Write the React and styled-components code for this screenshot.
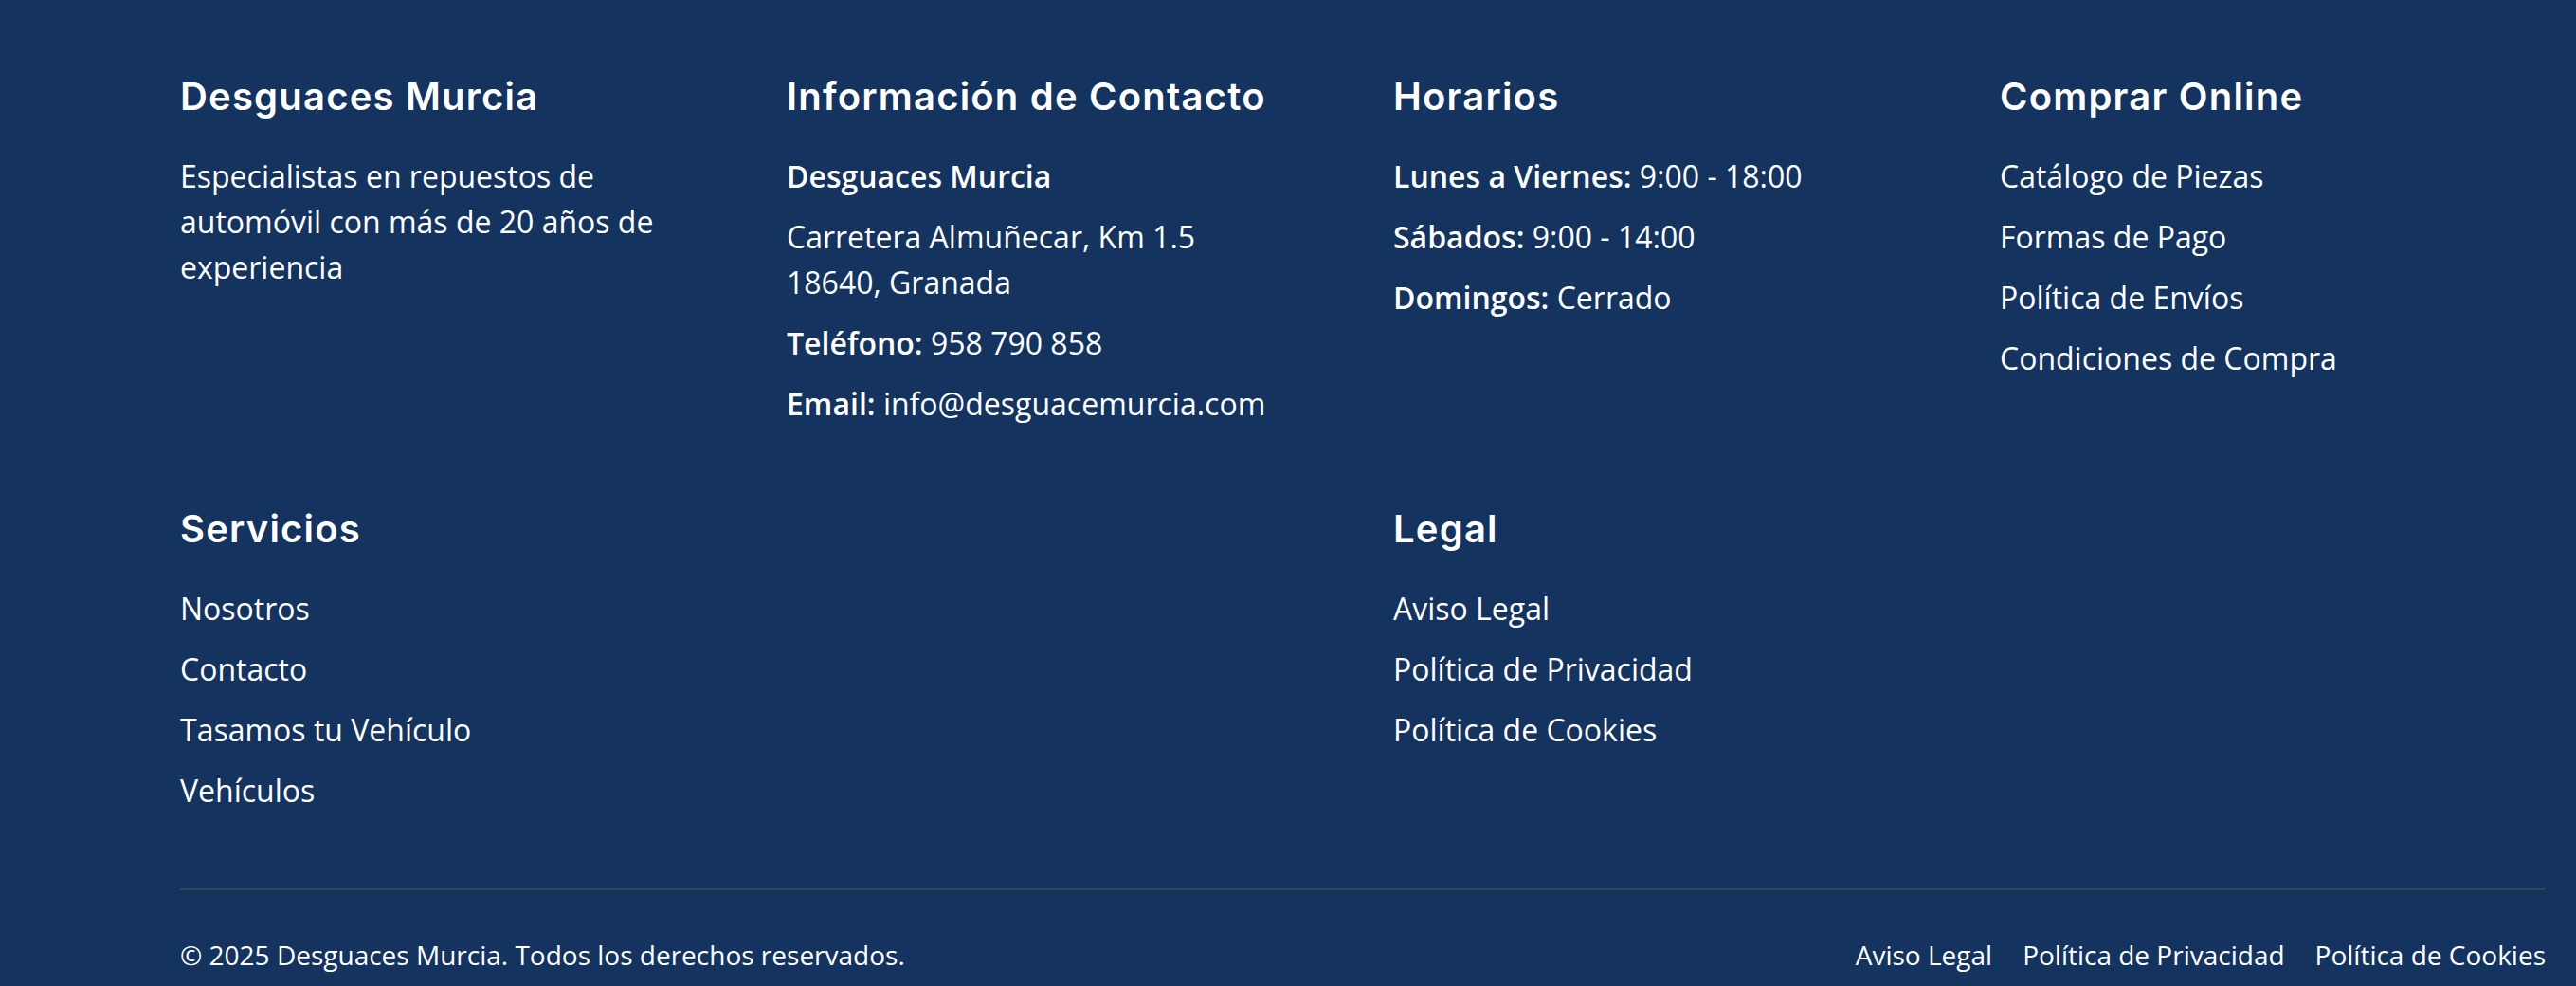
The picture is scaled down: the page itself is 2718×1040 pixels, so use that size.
import React from 'react'
import styled, { createGlobalStyle } from 'styled-components'

const Global = createGlobalStyle`
  html, body {
    margin: 0;
    padding: 0;
    background: #14335F;
  }
  * { box-sizing: border-box; }
`;

const Rodape = styled.footer`
  background: #14335F;
  color: #ffffff;
  font-family: "Open Sans", "Noto Sans", sans-serif;
  padding: 78px 32px 32px 190px;
  min-height: 1040px;
`;

const Grade = styled.div`
  display: grid;
  grid-template-columns: repeat(4, 1fr);
  column-gap: 64px;
  row-gap: 84px;
`;

const Coluna = styled.div`
  grid-column: ${p => p.$col || 'auto'};
`;

const Titulo = styled.h3`
  font-family: "Inter", "Liberation Sans", sans-serif;
  font-size: 40px;
  font-weight: 600;
  line-height: 48px;
  letter-spacing: 1.2px;
  margin: 0 0 36px 0;
`;

const Texto = styled.p`
  font-size: 32px;
  line-height: 48px;
  margin: 0 0 16px 0;
  &:last-child { margin-bottom: 0; }
  b { font-weight: 600; }
`;

const Lista = styled.ul`
  list-style: none;
  margin: 0;
  padding: 0;
`;

const Item = styled.li`
  font-size: 32px;
  line-height: 48px;
  margin-bottom: 16px;
  &:last-child { margin-bottom: 0; }
`;

const Link = styled.a`
  color: #ffffff;
  text-decoration: none;
`;

const Base = styled.div`
  margin-top: 79px;
  border-top: 2px solid #374151;
  padding-top: 47px;
  display: flex;
  justify-content: space-between;
  align-items: center;
  font-size: 28px;
  line-height: 42px;
`;

const LinksBase = styled.div`
  display: flex;
  gap: 32px;
`;

const Bloco = ({ titulo, itens, col }) => (
  <Coluna $col={col}>
    <Titulo>{titulo}</Titulo>
    <Lista>
      {itens.map(i => (
        <Item key={i}><Link href="#">{i}</Link></Item>
      ))}
    </Lista>
  </Coluna>
)

export default function App() {
  return (
    <>
      <Global />
      <Rodape>
        <Grade>
          <Coluna>
            <Titulo>Desguaces Murcia</Titulo>
            <Texto>Especialistas en repuestos de automóvil con más de 20 años de experiencia</Texto>
          </Coluna>
          <Coluna>
            <Titulo>Información de Contacto</Titulo>
            <Texto><b>Desguaces Murcia</b></Texto>
            <Texto>Carretera Almuñecar, Km 1.5<br />18640, Granada</Texto>
            <Texto><b>Teléfono:</b> 958 790 858</Texto>
            <Texto><b>Email:</b> info@desguacemurcia.com</Texto>
          </Coluna>
          <Coluna>
            <Titulo>Horarios</Titulo>
            <Texto><b>Lunes a Viernes:</b> 9:00 - 18:00</Texto>
            <Texto><b>Sábados:</b> 9:00 - 14:00</Texto>
            <Texto><b>Domingos:</b> Cerrado</Texto>
          </Coluna>
          <Bloco titulo="Comprar Online" itens={['Catálogo de Piezas', 'Formas de Pago', 'Política de Envíos', 'Condiciones de Compra']} />
          <Bloco titulo="Servicios" itens={['Nosotros', 'Contacto', 'Tasamos tu Vehículo', 'Vehículos']} />
          <Bloco col="3" titulo="Legal" itens={['Aviso Legal', 'Política de Privacidad', 'Política de Cookies']} />
        </Grade>
        <Base>
          <span>© 2025 Desguaces Murcia. Todos los derechos reservados.</span>
          <LinksBase>
            <Link href="#">Aviso Legal</Link>
            <Link href="#">Política de Privacidad</Link>
            <Link href="#">Política de Cookies</Link>
          </LinksBase>
        </Base>
      </Rodape>
    </>
  )
}
